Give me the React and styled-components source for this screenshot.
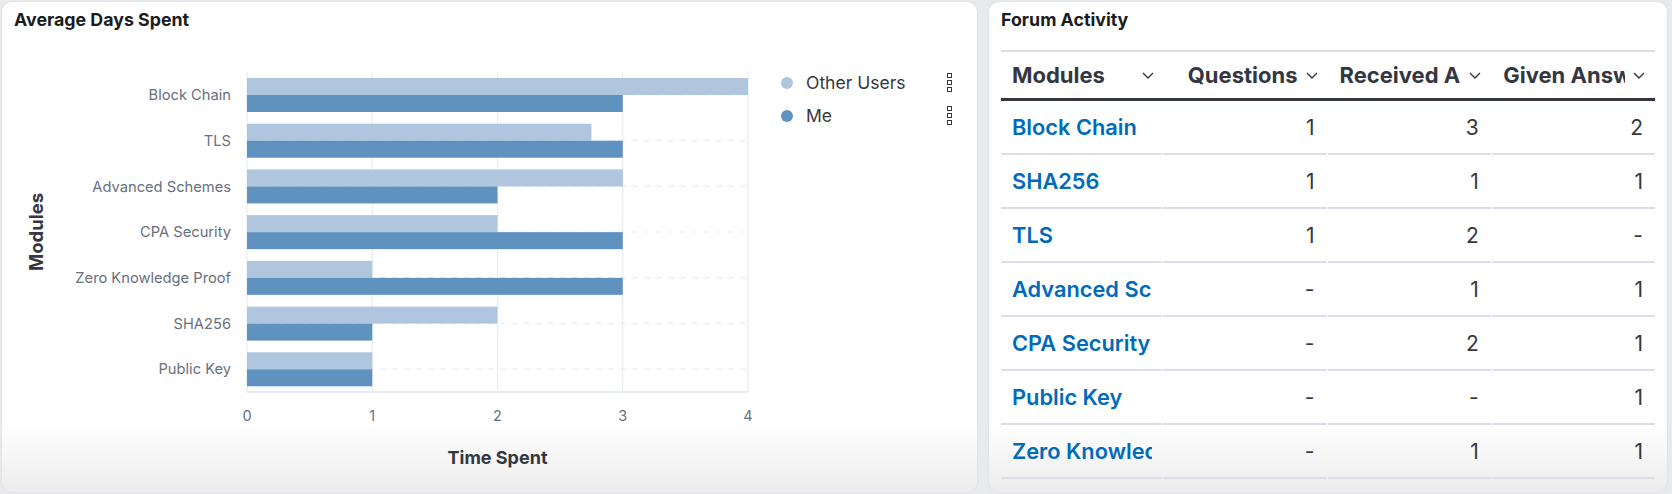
import React from "react";
import styled, { createGlobalStyle } from "styled-components";

const GlobalStyle = createGlobalStyle`
  html, body { margin: 0; padding: 0; }
  body {
    background: #e9eaee;
    font-family: Inter, "Noto Sans", sans-serif;
    color: #343741;
  }
`;

const Page = styled.div`
  display: flex;
  gap: 12px;
  padding: 2px 5px 2px 2px;
  height: 494px;
  box-sizing: border-box;
`;

const Panel = styled.section`
  box-sizing: border-box;
  height: 490px;
  width: ${(p) => (p.$width ? `${p.$width}px` : "auto")};
  flex: ${(p) => (p.$width ? "none" : "1")};
  display: flex;
  flex-direction: column;
  padding: 7px 12px 0 12px;
  border-radius: 10px;
  background: linear-gradient(180deg, #ffffff 0%, #ffffff 86%, #ececec 100%);
  box-shadow: 0 0 3px rgba(0, 0, 0, 0.08);
  overflow: hidden;
`;

const Title = styled.h2`
  margin: 0;
  font-size: 17.8px;
  line-height: 21px;
  font-weight: 700;
  color: #1a1c21;
`;

const ChartRow = styled.div`
  display: flex;
  margin: 10px 0 0 -12px;
`;

const Legend = styled.div`
  display: flex;
  flex-direction: column;
  width: 172px;
  margin-left: 9px;
  padding-top: 26px;
`;

const LegendItem = styled.div`
  display: flex;
  align-items: center;
  height: 33px;
`;

const Dot = styled.span`
  width: 12px;
  height: 12px;
  border-radius: 50%;
  background: ${(p) => p.$color};
  flex: none;
`;

const LegendLabel = styled.span`
  flex: 1;
  margin-left: 13px;
  font-size: 17.5px;
  color: #343741;
`;

const TableWrap = styled.div`
  margin-top: 20px;
  display: flex;
  flex-direction: column;
`;

const HeaderRow = styled.div`
  display: flex;
  gap: 1px;
  height: 46px;
  border-top: 2px solid #d9dee7;
  border-bottom: 3px solid #343741;
`;

const HeaderCell = styled.div`
  flex: 1;
  min-width: 0;
  display: flex;
  align-items: center;
  justify-content: ${(p) => (p.$numeric ? "flex-end" : "flex-start")};
  padding: 0 10px 0 11px;
  font-size: 22px;
  font-weight: 700;
  color: #343741;
`;

const HeaderText = styled.span`
  flex: ${(p) => (p.$grow ? "1" : "0 1 auto")};
  min-width: 0;
  overflow: hidden;
  white-space: nowrap;
`;

const Chevron = styled.svg`
  flex: none;
  margin-left: 8px;
`;

const BodyRow = styled.div`
  display: flex;
  gap: 1px;
`;

const Cell = styled.div`
  flex: 1;
  min-width: 0;
  height: 52px;
  display: flex;
  align-items: center;
  justify-content: ${(p) => (p.$numeric ? "flex-end" : "flex-start")};
  padding: 0 ${(p) => (p.$numeric ? "12px" : "10px")} 0 11px;
  border-bottom: 2px solid #d9dee7;
  font-size: 21px;
  color: #343741;
  overflow: hidden;
  white-space: nowrap;
`;

const ModuleLink = styled.a`
  color: #006bb8;
  font-size: 21.8px;
  font-weight: 600;
  text-decoration: none;
  overflow: hidden;
  white-space: nowrap;
`;

const chartData = [
  ["Block Chain", 4, 3],
  ["TLS", 2.75, 3],
  ["Advanced Schemes", 3, 2],
  ["CPA Security", 2, 3],
  ["Zero Knowledge Proof", 1, 3],
  ["SHA256", 2, 1],
  ["Public Key", 1, 1],
];

const tableData = [
  ["Block Chain", "1", "3", "2"],
  ["SHA256", "1", "1", "1"],
  ["TLS", "1", "2", "-"],
  ["Advanced Schemes", "-", "1", "1"],
  ["CPA Security", "-", "2", "1"],
  ["Public Key", "-", "-", "1"],
  ["Zero Knowledge Proof", "-", "1", "1"],
];

const LIGHT = "#b0c5de";
const DARK = "#6092c0";

function BarChart() {
  const x0 = 245;
  const unit = 125.25;
  const top = 32;
  const bottom = 352;
  const band = (bottom - top) / chartData.length;
  const sx = (v) => x0 + v * unit;
  return (
    <svg width="770" height="448" style={{ flex: "none", display: "block" }}>
      {chartData.map((d, i) => {
        const c = top + band * i + band / 2;
        return (
          <line key={"h" + i} x1={x0 + 1} x2={sx(4) - 1} y1={c} y2={c}
            stroke="#e9edf3" strokeWidth="1.2" strokeDasharray="6 6" />
        );
      })}
      {[0, 1, 2, 3, 4].map((t) => (
        <line key={"v" + t} x1={sx(t)} x2={sx(t)} y1={top} y2={bottom}
          stroke="#e8ecf2" strokeWidth="1.2" />
      ))}
      <line x1={x0} x2={sx(4)} y1={bottom} y2={bottom} stroke="#e6eaf1" strokeWidth="2" />
      {chartData.map((d, i) => {
        const bt = top + band * i + 6;
        return (
          <g key={"b" + i}>
            <rect x={x0} y={bt} width={d[1] * unit} height={17} fill={LIGHT} />
            <rect x={x0} y={bt + 17} width={d[2] * unit} height={17} fill={DARK} />
          </g>
        );
      })}
      {chartData.map((d, i) => (
        <text key={"l" + i} x={229} y={top + band * i + band / 2} dy="0.36em"
          textAnchor="end" fontSize="14.7" fill="#69707d" fontFamily="Inter, sans-serif">
          {d[0]}
        </text>
      ))}
      {[0, 1, 2, 3, 4].map((t) => (
        <text key={"t" + t} x={sx(t)} y={375.5} dy="0.36em" textAnchor="middle"
          fontSize="14.5" fill="#69707d" fontFamily="Inter, sans-serif">
          {t}
        </text>
      ))}
      <text x={(x0 + sx(4)) / 2} y={424} textAnchor="middle" fontSize="18"
        fontWeight="700" fill="#343741" fontFamily="Inter, sans-serif">
        Time Spent
      </text>
      <text transform="translate(41 192) rotate(-90)" textAnchor="middle" fontSize="18.5"
        fontWeight="700" fill="#343741" fontFamily="Inter, sans-serif">
        Modules
      </text>
    </svg>
  );
}

function BoxesIcon() {
  return (
    <svg width="6" height="19" viewBox="0 0 6 19">
      <rect x="0.5" y="0.5" width="4" height="4" fill="none" stroke="#343741" strokeWidth="1" />
      <rect x="0.5" y="7.5" width="4" height="4" fill="none" stroke="#343741" strokeWidth="1" />
      <rect x="0.5" y="14.5" width="4" height="4" fill="none" stroke="#343741" strokeWidth="1" />
    </svg>
  );
}

function ChevronIcon() {
  return (
    <Chevron width="12" height="7" viewBox="0 0 12 7">
      <path d="M1 1 L6 6 L11 1" fill="none" stroke="#343741" strokeWidth="1.4" />
    </Chevron>
  );
}

const headers = ["Modules", "Questions", "Received Answers", "Given Answers"];

export default function App() {
  return (
    <>
      <GlobalStyle />
      <Page>
        <Panel $width={975}>
          <Title>Average Days Spent</Title>
          <ChartRow>
            <BarChart />
            <Legend>
              <LegendItem>
                <Dot $color={LIGHT} />
                <LegendLabel>Other Users</LegendLabel>
                <BoxesIcon />
              </LegendItem>
              <LegendItem>
                <Dot $color={DARK} />
                <LegendLabel>Me</LegendLabel>
                <BoxesIcon />
              </LegendItem>
            </Legend>
          </ChartRow>
        </Panel>
        <Panel>
          <Title>Forum Activity</Title>
          <TableWrap>
            <HeaderRow>
              {headers.map((h, i) => (
                <HeaderCell key={h} $numeric={i > 0}>
                  <HeaderText $grow={i === 0}>{h}</HeaderText>
                  <ChevronIcon />
                </HeaderCell>
              ))}
            </HeaderRow>
            {tableData.map((r) => (
              <BodyRow key={r[0]}>
                <Cell>
                  <ModuleLink href="#">{r[0]}</ModuleLink>
                </Cell>
                <Cell $numeric>{r[1]}</Cell>
                <Cell $numeric>{r[2]}</Cell>
                <Cell $numeric>{r[3]}</Cell>
              </BodyRow>
            ))}
          </TableWrap>
        </Panel>
      </Page>
    </>
  );
}
